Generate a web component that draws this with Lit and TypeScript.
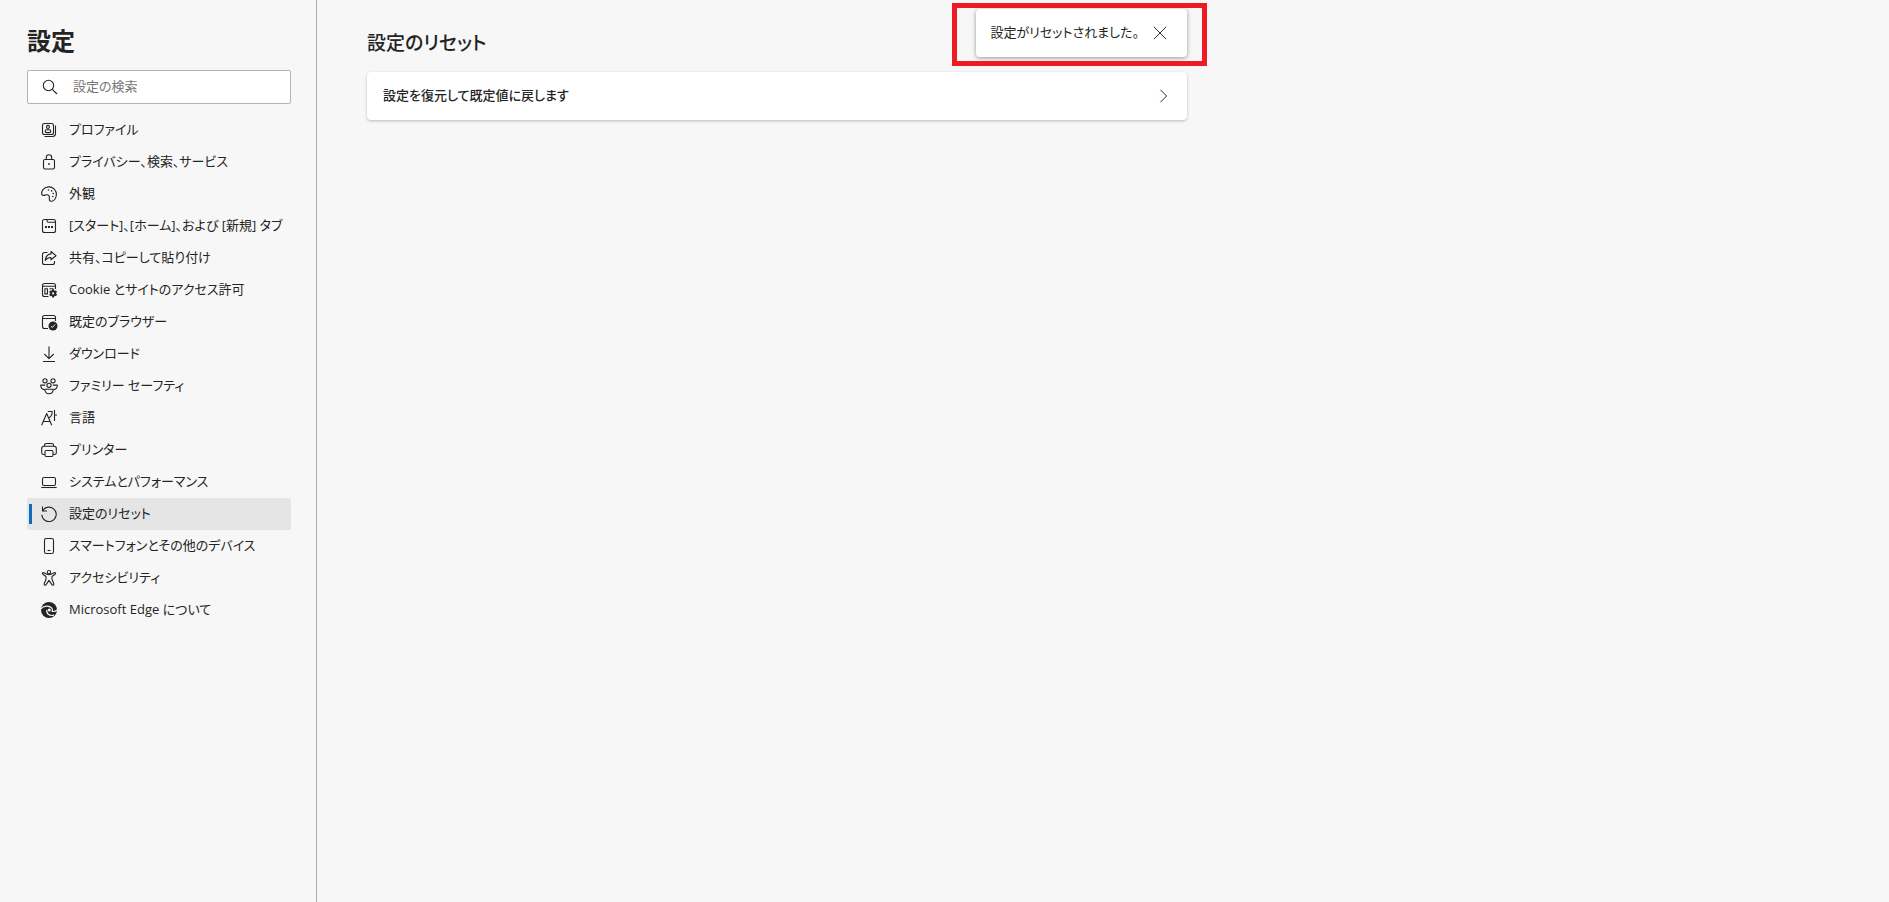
import { LitElement, html, css, svg } from "lit";
import { customElement, property, state } from "lit/decorators.js";

const icons: Record<string, unknown> = {
  profile: svg`<rect x="1.5" y="1.5" width="11" height="11" rx="2"/><circle cx="7" cy="4.9" r="1.5"/><rect x="4.2" y="7.8" width="5.6" height="2.8" rx="1.3"/><path d="M14.5 3.5v8a3 3 0 0 1-3 3h-8"/>`,
  lock: svg`<rect x="2.5" y="5.5" width="11" height="9.5" rx="1.5"/><path d="M5.3 5.5V3.400a2.700 2.700 0 0 1 5.4 0V5.500"/><circle class="fill" cx="8" cy="10" r=".9"/>`,
  palette: svg`<path d="M.7 8C.2 5.5 2.4 1.3 7.3.9c4.8-.4 8.3 3.6 8.1 7.9-.2 3.7-2.6 6.6-5.1 6.5-2.3-.1-2-2-1.9-3.5.1-1.7-.5-2.7-1.9-3-1.8-.4-3 .9-4.2.6-.9-.2-1.4-.7-1.6-1.4z"/><g class="fill"><circle cx="7.5" cy="4" r=".8"/><circle cx="10.6" cy="4.9" r=".8"/><circle cx="12.2" cy="7.5" r=".8"/><circle cx="11.8" cy="10.5" r=".8"/></g>`,
  tab: svg`<rect x="1.5" y="1.5" width="13" height="13" rx="2"/><path d="M6 1.5v1.200a1.500 1.500 0 0 0 1.500 1.500h7"/><g class="fill"><rect x="4" y="8" width="2" height="2"/><rect x="7" y="8" width="2" height="2"/><rect x="10" y="8" width="2" height="2"/></g>`,
  share: svg`<path d="M6.5 2.5h-3a2 2 0 0 0-2 2v8a2 2 0 0 0 2 2h8a2 2 0 0 0 2-2V11"/><path d="M10 1.5l5 4.2-5 4.1V7.500C7.2 7.4 5.6 8.5 4.2 10.5 4.6 6.8 6.5 4.2 10 3.9z"/>`,
  cookie: svg`<path d="M7.5 14.5h-4a2 2 0 0 1-2-2v-9a2 2 0 0 1 2-2h9a2 2 0 0 1 2 2V7M1.5 4.2h13"/><path d="M3.9 6.7h2.6v5.2H3.9zM8.5 6.7h4"/><path class="fill" d="M11.2 7.300h1.800l.4 1.500 1.700-.4.9 1.600-1.100 1.300 1.100 1.300-.9 1.600-1.700-.4-.4 1.600h-1.800l-.4-1.600-1.700.4-.9-1.600 1.100-1.300-1.100-1.300.9-1.600 1.700.4z"/><circle class="paper" cx="12.1" cy="11.4" r="1.1"/>`,
  browser: svg`<path d="M7 14.5H3.5a2 2 0 0 1-2-2v-9a2 2 0 0 1 2-2h9a2 2 0 0 1 2 2V7M1.5 4.5h13"/><circle class="fill" cx="12" cy="12" r="4.5"/><path class="light" d="M9.9 12.2l1.4 1.3 2.8-3"/>`,
  download: svg`<path d="M8 .5v12M3.300 8L8 12.600 12.700 8M2 15.500h12"/>`,
  family: svg`<circle cx="4" cy="2.8" r="2.1"/><circle cx="12" cy="2.8" r="2.1"/><circle cx="8" cy="7.3" r="2.1"/><path d="M3.6 11.7C1.4 11.5-.3 9.8-.3 7.1h4.5M12.4 11.7c2.2-.2 3.9-1.9 3.9-4.6h-4.5"/><path d="M3.8 11.3h8.4c0 3-1.7 4.500-4.200 4.500s-4.200-1.500-4.200-4.500z"/>`,
  language: svg`<path d="M.6 15.3L5.7 3.5l5 11.8M2.2 11.5h7M6.8 1.5h4.4c0 3-1 5-3 6.2M13.5 0v11M13.5 5H16"/>`,
  printer: svg`<path d="M4 12.5H2.500a1.800 1.800 0 0 1-1.800-1.800V6.500a2.200 2.200 0 0 1 2.200-2.200h10.200a2.200 2.200 0 0 1 2.200 2.200v4.200a1.800 1.800 0 0 1-1.800 1.800H12"/><path d="M3.5 4.3V3.200a1.700 1.700 0 0 1 1.700-1.700h5.600a1.700 1.700 0 0 1 1.700 1.700v1.100"/><rect x="4" y="8.5" width="8" height="6" rx="1.2"/>`,
  laptop: svg`<rect x="1.5" y="3.5" width="13" height="8" rx="1.5"/><path d="M.3 13.5h15.4"/>`,
  reset: svg`<path d="M1.5.5v4.500H6M1.700 4.800A7.200 7.200 0 1 1 .8 8.800"/>`,
  phone: svg`<rect x="3.5" y=".5" width="9" height="15" rx="1.8"/><path d="M6.5 12.5h3"/>`,
  access: svg`<circle cx="8" cy="2.2" r="1.7"/><path d="M5.9 4.3L2.8 2.7c-1.3-.5-2 .9-.9 1.6L5 6.5v2.7l-1.8 4.6c-.4 1.5 1.300 2 1.900.8L8 10.400l2.900 4.200c.6 1.200 2.300.7 1.900-.8L11 9.200V6.500l3.100-2.200c1.100-.7.4-2.100-.9-1.600l-3.100 1.600c-1.200.5-3 .5-4.200 0z"/>`,
  edge: svg`<circle class="fill" cx="8" cy="8" r="8"/><path class="swirl" d="M-.2 7C2.5 3.4 8 3 10.8 6.2c.8 1 1 2 .4 3.2 2.5.4 4-.4 5-1.6M6 7.8c-1 3.4 2 6.6 7 5.400"/><circle class="paper" cx="8.3" cy="8" r="1.5"/>`,
  search: svg`<circle cx="6.5" cy="6.5" r="5.2"/><path d="M10.3 10.3l4.7 4.7"/>`,
  close: svg`<path d="M1 1l14 14M15 1L1 15"/>`,
  chevron: svg`<path d="M4 1l7 7-7 7"/>`,
};

@customElement("line-icon")
export class LineIcon extends LitElement {
  @property() name = "";

  static styles = css`
    :host { display: block; flex: none; width: 16px; height: 16px; }
    svg { display: block; width: 100%; height: 100%; overflow: visible; fill: none; stroke: currentColor; stroke-width: 1.1; stroke-linejoin: round; }
    .fill { fill: currentColor; stroke: none; }
    .paper { fill: #f7f7f7; stroke: none; }
    .light { stroke: #f7f7f7; stroke-width: 1; }
    .swirl { stroke: #f7f7f7; stroke-width: 1.2; }
  `;

  render() {
    return html`<svg viewBox="0 0 16 16" aria-hidden="true">${icons[this.name]}</svg>`;
  }
}

const sections = [
  ["profile", "プロファイル"],
  ["lock", "プライバシー、検索、サービス"],
  ["palette", "外観"],
  ["tab", "[スタート]、[ホーム]、および [新規] タブ"],
  ["share", "共有、コピーして貼り付け"],
  ["cookie", "Cookie とサイトのアクセス許可"],
  ["browser", "既定のブラウザー"],
  ["download", "ダウンロード"],
  ["family", "ファミリー セーフティ"],
  ["language", "言語"],
  ["printer", "プリンター"],
  ["laptop", "システムとパフォーマンス"],
  ["reset", "設定のリセット"],
  ["phone", "スマートフォンとその他のデバイス"],
  ["access", "アクセシビリティ"],
  ["edge", "Microsoft Edge について"],
];

@customElement("app-root")
export class AppRoot extends LitElement {
  @state() private current = "reset";
  @state() private toastOpen = true;

  static styles = css`
    :host {
      display: flex;
      min-height: 100vh;
      background: #f7f7f7;
      color: #242424;
      font: 400 13px/20px "Open Sans", "Noto Sans CJK JP", sans-serif;
      font-feature-settings: "palt";
    }
    * { box-sizing: border-box; }
    h1, h2 { margin: 0; }
    button, input { font: inherit; font-feature-settings: inherit; color: inherit; }
    .sidebar { flex: none; width: 317px; padding: 25px 25px 0 27px; border-right: 1px solid #adadad; }
    h1 { font-size: 24px; line-height: 32px; font-weight: 600; }
    .search { display: flex; align-items: center; gap: 15px; height: 34px; margin: 13px 0 10px; padding: 0 14px; background: #fff; border: 1px solid #b3b3b3; border-radius: 2px; }
    .search input { flex: 1; min-width: 0; padding: 0 0 2px; border: 0; outline: 0; background: none; }
    .search input::placeholder { color: #767676; opacity: 1; }
    .item { display: flex; align-items: center; gap: 12px; height: 32px; padding-left: 14px; border-radius: 2px; color: inherit; text-decoration: none; white-space: nowrap; }
    .item span, .card span, .toast span { padding-bottom: 2px; }
    .item.active { position: relative; background: #e5e5e5; }
    .item.active::before { content: ""; position: absolute; left: 2px; top: 6px; width: 3px; height: 20px; background: #0f6cbd; }
    .main { flex: 1; min-width: 0; padding: 27px 50px 0; }
    .column { position: relative; max-width: 820px; }
    h2 { font-size: 19px; line-height: 32px; font-weight: 500; }
    .card { display: flex; align-items: center; justify-content: space-between; width: 100%; height: 48px; margin-top: 13px; padding: 0 16px; border: 0; border-radius: 4px; background: #fff; box-shadow: 0 1px 3px rgba(0, 0, 0, .25); font-weight: 500; }
    .highlight { position: absolute; right: -20px; top: -24px; padding: 1px 15px 4px 19px; border: 5px solid #ed1c24; }
    .toast { display: flex; align-items: center; gap: 10px; height: 48px; padding: 0 16px 0 15px; border-radius: 4px; background: #fff; box-shadow: 0 1px 4px rgba(0, 0, 0, .4); white-space: nowrap; }
    .close { padding: 0 4px; border: 0; background: none; }
    .close line-icon, .card line-icon { width: 14px; height: 14px; }
  `;

  render() {
    return html`
      <aside class="sidebar">
        <h1>設定</h1>
        <label class="search">
          <line-icon name="search"></line-icon>
          <input type="search" placeholder="設定の検索" aria-label="設定の検索" />
        </label>
        <nav>
          ${sections.map(
            ([id, label]) => html`<a
              class="item ${id === this.current ? "active" : ""}"
              href="#${id}"
              @click=${() => (this.current = id)}
              ><line-icon name=${id}></line-icon><span>${label}</span></a
            >`
          )}
        </nav>
      </aside>
      <main class="main">
        <div class="column">
          <h2>設定のリセット</h2>
          <button class="card">
            <span>設定を復元して既定値に戻します</span>
            <line-icon name="chevron"></line-icon>
          </button>
          ${this.toastOpen
            ? html`<div class="highlight">
                <div class="toast" role="status">
                  <span>設定がリセットされました。</span>
                  <button class="close" aria-label="閉じる" @click=${() => (this.toastOpen = false)}>
                    <line-icon name="close"></line-icon>
                  </button>
                </div>
              </div>`
            : ""}
        </div>
      </main>
    `;
  }
}
